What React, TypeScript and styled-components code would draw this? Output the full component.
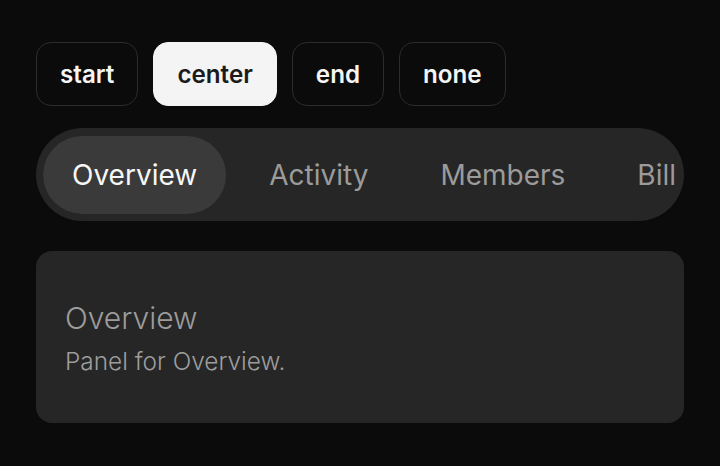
import React, { useState } from "react";
import styled, { createGlobalStyle } from "styled-components";

const Global = createGlobalStyle`
  html, body { margin: 0; padding: 0; background: #0b0b0b; }
  body { font-family: Inter, "Noto Sans", sans-serif; -webkit-font-smoothing: antialiased; }
`;

const Page = styled.div`
  padding: 42px 36px 36px;
  display: flex;
  flex-direction: column;
  gap: 22px;
`;

const ButtonRow = styled.div`
  display: flex;
  gap: 15px;
`;

const AlignButton = styled.button<{ $active?: boolean }>`
  height: 64px;
  padding: 0 23px;
  border-radius: 15px;
  border: 1px solid ${(p) => (p.$active ? "#f4f4f4" : "#2c2c2c")};
  background: ${(p) => (p.$active ? "#f4f4f4" : "#0b0b0b")};
  color: ${(p) => (p.$active ? "#1b1b1b" : "#f5f5f5")};
  font-family: Inter, sans-serif;
  font-size: 24.2px;
  font-weight: 600;
  cursor: pointer;
`;

const TabList = styled.div`
  height: 93px;
  box-sizing: border-box;
  border-radius: 47px;
  background: #262626;
  padding: 7px;
  display: flex;
`;

const TabTrack = styled.div`
  flex: 1;
  min-width: 0;
  display: flex;
  align-items: center;
  gap: 14px;
  overflow: hidden;
  border-radius: 39px 0 0 39px;
`;

const Tab = styled.button<{ $active?: boolean }>`
  flex: none;
  height: 78px;
  padding: 0 29px;
  border: none;
  border-radius: 39px;
  background: ${(p) => (p.$active ? "#3a3a3a" : "transparent")};
  color: ${(p) => (p.$active ? "#f7f7f7" : "#9b9b9b")};
  font-family: Inter, sans-serif;
  font-size: 28px;
  font-weight: 400;
  white-space: nowrap;
  cursor: pointer;
`;

const Panel = styled.div`
  margin-top: 8px;
  height: 172px;
  box-sizing: border-box;
  border-radius: 16px;
  background: #262626;
  padding: 0 29px;
  display: flex;
  flex-direction: column;
  justify-content: center;
  gap: 11px;
`;

const PanelTitle = styled.div`
  font-size: 30px;
  font-weight: 300;
  color: #9c9c9c;
  line-height: 36px;
`;

const PanelText = styled.div`
  font-size: 24.4px;
  font-weight: 300;
  color: #9d9d9d;
  line-height: 28px;
`;

const aligns = ["start", "center", "end", "none"];
const tabs = ["Overview", "Activity", "Members", "Billing", "Settings"];

export default function App() {
  const [align, setAlign] = useState("center");
  const [tab, setTab] = useState("Overview");
  return (
    <>
      <Global />
      <Page>
        <ButtonRow>
          {aligns.map((a) => (
            <AlignButton key={a} $active={a === align} onClick={() => setAlign(a)}>
              {a}
            </AlignButton>
          ))}
        </ButtonRow>
        <TabList>
          <TabTrack>
            {tabs.map((t) => (
              <Tab key={t} $active={t === tab} onClick={() => setTab(t)}>
                {t}
              </Tab>
            ))}
          </TabTrack>
        </TabList>
        <Panel>
          <PanelTitle>{tab}</PanelTitle>
          <PanelText>Panel for {tab}.</PanelText>
        </Panel>
      </Page>
    </>
  );
}
